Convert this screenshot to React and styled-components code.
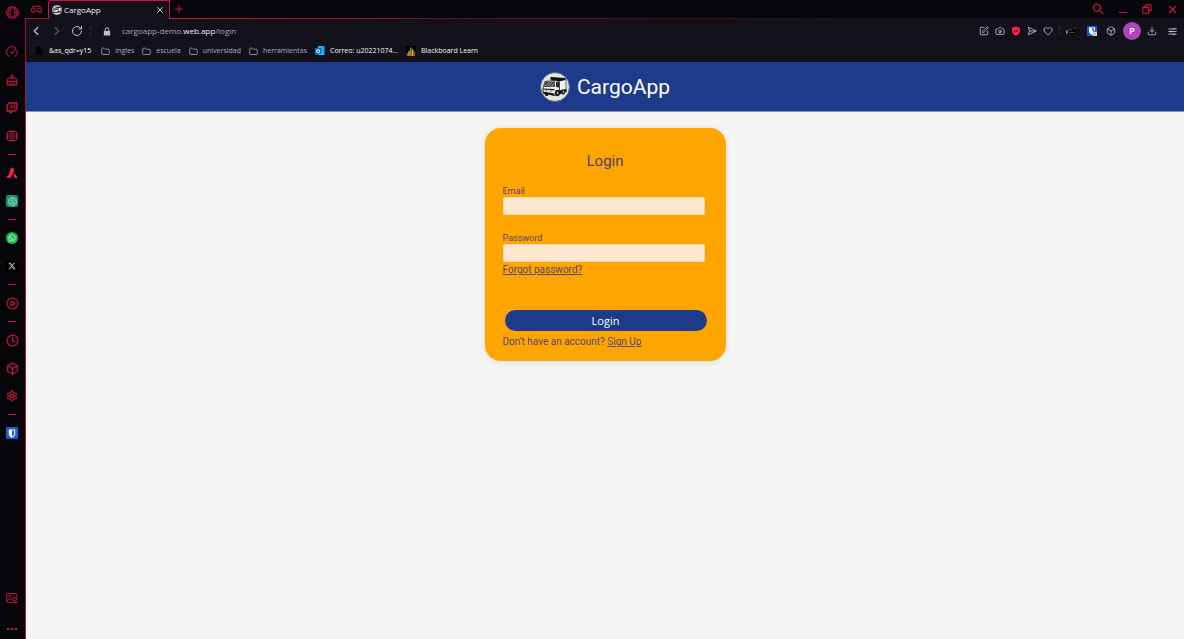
import React from "react";
import styled, { createGlobalStyle } from "styled-components";
import { Box, Camera, ChevronLeft, ChevronRight, Clock, Download, Folder, Heart, RotateCw, SendHorizontal, SquarePen, X, Plus, CirclePlay } from "lucide-react";
import { FaWhatsapp, FaXTwitter } from "react-icons/fa6";
import { SiOpenai } from "react-icons/si";

const GlobalStyle = createGlobalStyle`
  *, *::before, *::after { box-sizing: border-box; }
  body { margin: 0; background: #f5f5f5; font-family: Roboto, "Liberation Sans", sans-serif; }
  button { font-family: inherit; border: 0; padding: 0; background: none; color: inherit; cursor: pointer; }
  svg { display: block; flex: none; }
`;

const red = "#d0163f";
const line = "#a01230";
const ui = `"Open Sans", "Noto Sans", sans-serif`;

const Shell = styled.div`
  display: grid;
  grid-template-columns: 25px 1fr;
  min-height: 100vh;
  background: #07060b;
`;
const Sidebar = styled.nav`
  display: flex;
  flex-direction: column;
  padding-right: 1px;
  color: ${red};
`;
const SideButton = styled.button`
  display: flex;
  align-items: center;
  justify-content: center;
  width: 100%;
  height: ${(p) => p.$height || 28}px;
  margin-bottom: ${(p) => p.$after || 0}px;
  margin-top: ${(p) => (p.$push ? "auto" : 0)};
`;
const SideRule = styled.hr`
  width: 8px;
  height: 1px;
  margin: 4px auto;
  border: 0;
  background: ${red};
`;
const Badge = styled.span`
  display: flex;
  align-items: center;
  justify-content: center;
  width: 12px;
  height: 12px;
  border-radius: ${(p) => p.$radius}px;
  background: ${(p) => p.$bg};
  color: ${(p) => p.$color || "#fff"};
`;
const Main = styled.div`
  display: flex;
  flex-direction: column;
  min-width: 0;
`;
const TabBar = styled.div`
  display: flex;
  height: 19px;
  color: ${red};
`;
const TabLead = styled.div`
  display: flex;
  align-items: center;
  justify-content: center;
  width: 23px;
  border-bottom: 1px solid ${line};
`;
const Tab = styled.div`
  display: flex;
  align-items: center;
  width: 122px;
  padding: 0 4px 0 3px;
  gap: 2px;
  background: #13111a;
  border: 1px solid ${red};
  border-bottom: 0;
  border-radius: 3px 0 0 0;
  color: #f2f0f5;
  font: 500 8px/16px ${ui};
`;
const TabTitle = styled.span`
  flex: 1;
`;
const TabRest = styled.div`
  display: flex;
  flex: 1;
  align-items: center;
  gap: 14px;
  padding: 0 5px 0 3px;
  border-bottom: 1px solid;
  border-image: linear-gradient(90deg, ${red}, #5c0d20 35%, #13111a 80%) 1;
`;
const Push = styled.span`
  flex: 1;
`;
const Frame = styled.div`
  display: flex;
  flex: 1;
  flex-direction: column;
  border-left: 1px solid ${line};
  background: #f5f5f5;
`;
const Toolbar = styled.div`
  display: flex;
  align-items: center;
  height: 24px;
  padding: 0 7px 0 3px;
  background: #13111a;
  color: #c5bfd2;
`;
const NavGroup = styled.div`
  display: flex;
  align-items: center;
  gap: ${(p) => p.$gap}px;
  margin-left: ${(p) => p.$left || 0}px;
`;
const Address = styled.div`
  flex: 1;
  padding-left: 11px;
  color: #aaa5b8;
  font: 400 8px/16px ${ui};
`;
const Host = styled.strong`
  color: #efedf5;
  font-weight: 500;
`;
const Dots = styled.span`
  width: 1px;
  height: 8px;
  border-left: 1px dotted #3a3644;
`;
const Avatar = styled.button`
  width: 18px;
  height: 18px;
  border-radius: 9px;
  background: #ab47bc;
  color: #fff;
  font: 600 9px/18px ${ui};
`;
const Bookmarks = styled.div`
  display: flex;
  align-items: flex-start;
  height: 19px;
  padding: 0 9px 0 8px;
  gap: 8px;
  background: #13111a;
`;
const Bookmark = styled.a`
  display: flex;
  align-items: center;
  gap: 5px;
  color: ${(p) => (p.$bright ? "#f8f6fc" : "#b0abca")};
  font: ${(p) => (p.$bright ? 500 : 400)} 7px/16px ${ui};
  text-decoration: none;
  white-space: nowrap;
`;
const BookmarkGroup = styled.div`
  display: flex;
  gap: 8px;
  padding-left: 2px;
`;
const Header = styled.header`
  display: flex;
  align-items: center;
  justify-content: center;
  gap: 7px;
  height: 50px;
  border-bottom: 1px solid #8995be;
  background: #1e3a8a;
`;
const Brand = styled.h1`
  margin: 0;
  color: #fff;
  font-size: 21px;
  line-height: 24px;
  font-weight: 400;
`;
const Card = styled.form`
  display: flex;
  flex-direction: column;
  width: 241px;
  margin: 16px auto;
  padding: 23px 18px 11px;
  border-radius: 16px;
  background: #ffa500;
  box-shadow: 0 1px 6px rgba(0, 0, 0, 0.12);
  color: #55457a;
`;
const Title = styled.h2`
  margin: 0 0 14px;
  color: #4a3f7c;
  font-size: 15px;
  line-height: 20px;
  font-weight: 400;
  text-align: center;
`;
const Field = styled.div`
  display: flex;
  flex-direction: column;
  margin: 0 3px ${(p) => p.$after || 0}px 0;
`;
const Label = styled.label`
  font-size: 9px;
  line-height: 12px;
`;
const Input = styled.input`
  width: 100%;
  height: 18px;
  padding: 0 4px;
  border: 1px solid #fbdcae;
  border-radius: 2px;
  background: #fde8cf;
  outline: 0;
`;
const Small = styled.p`
  margin: 0;
  font-size: 10px;
  line-height: 16px;
`;
const Link = styled.a`
  color: inherit;
  text-decoration: underline;
`;
const Submit = styled.button`
  height: 21px;
  margin: 32px 1px 3px 2px;
  border-radius: 11px;
  background: #1e3a8a;
  color: #fff;
  font: 400 11px/21px ${ui};
`;

const Stroke = ({ size = 12, children, width = 1 }) => (
  <svg width={size} height={size} viewBox="0 0 12 12" fill="none" stroke="currentColor" strokeWidth={width} strokeLinecap="round" strokeLinejoin="round">
    {children}
  </svg>
);

const Truck = ({ size }) => (
  <svg width={size} height={size} viewBox="0 0 30 30">
    <circle cx="15" cy="15" r="14.5" fill="#e4e4e4" stroke="#5a5f72" />
    <path d="M11 6 25 7 26 8v11l-7 2V9.5L11 8z" fill="#f2f2f2" stroke="#333" strokeWidth="0.7" />
    <path d="M10.500 5 25.500 6v2l-6.500 1.500-8.500-2z" fill="#111" />
    <path d="M5 9.500 16 8.500l3.500 1.500v11.500l-5 2L3 20v-4z" fill="#f4f4f4" stroke="#1c1c1c" strokeWidth="0.8" />
    <path d="m5.500 10 9.500-.5v5.300L3.800 15z" fill="#3c3c3c" />
    <path d="m16 9.700 3 .8v5l-3-.5z" fill="#2a2a2a" />
    <path d="m5.500 14 3.500-3.500M8 14.300l4-4M11.500 14.300l2.500-3" stroke="#d8d8d8" strokeWidth="0.8" />
    <path d="M3 16.500 14.500 17v1.300L3 17.600zM2.500 19.500 14.500 21.500v2.200L3.500 21.700zM19 18.500l7.500-1.500v3l-7.500 2.500z" fill="#141414" />
    <path d="M5.500 18.700h2M9.500 19.200h3" stroke="#555" />
    <ellipse cx="17.300" cy="21" rx="2.400" ry="3.200" fill="#141414" />
    <ellipse cx="17.500" cy="21" rx="0.900" ry="1.400" fill="#aaa" />
    <ellipse cx="23.200" cy="20" rx="2" ry="2.700" fill="#222" />
    <ellipse cx="23.400" cy="20" rx="0.700" ry="1.100" fill="#bbb" />
    <path d="M4.500 21.500h3.500v2.500H5.500z" fill="#222" />
  </svg>
);

const Opera = () => (
  <Stroke size={13} width={0.9}>
    <circle cx="6" cy="6" r="5.500" />
    <ellipse cx="6" cy="6" rx="2.400" ry="4.300" />
    <path d="M4.300 1.600C.9 3.600.9 8.400 4.300 10.400M7.700 1.600c3.400 2 3.400 6.800 0 8.800" />
  </Stroke>
);
const Gauge = () => (
  <Stroke>
    <path d="M3 10.500A5.400 5.400 0 1 1 9.800 2.200M11.200 4.800A5.400 5.400 0 0 1 9 10.500" />
    <circle cx="6" cy="7" r="0.900" />
    <path d="m6.800 6.200 3-3" />
  </Stroke>
);
const Broom = () => (
  <Stroke>
    <path d="M5 4V1.500Q6 .3 7 1.500V4" />
    <path d="M1.500 7V5.500Q1.500 4 3 4h6q1.500 0 1.500 1.500V7z" />
    <path d="M1.500 7 1 11h10l-.5-4M4 11V9M6 11V9M8 11V9" />
  </Stroke>
);
const Twitch = () => (
  <Stroke width={1.3}>
    <path d="M1.200 3 3 1h8v5.500L8.500 9H6.500L4.300 11V9H1.200z" />
    <path d="M5.500 3.500V6M8.300 3.500V6" />
  </Stroke>
);
const Chip = () => (
  <Stroke width={0.9}>
    <rect x="1.500" y="1.500" width="9" height="9" rx="1.500" />
    <rect x="3.700" y="3.200" width="4.600" height="5.600" rx="1" />
    <path d="M5.200 5.300h1.600M5.200 6.800h1.600M.5 4v0M.5 6v0M.5 8v0M11.500 4v0M11.500 6v0M11.500 8v0M4 .5v0M6 .5v0M8 .5v0M4 11.500v0M6 11.500v0M8 11.500v0" />
  </Stroke>
);
const Aria = () => (
  <svg width="12" height="12" viewBox="0 0 12 12" fill="#fa1e4e">
    <path d="M4.700 1.200C5.300 0 6.800.2 7.200 1.300L8.200 4 5 9.800C4 11.600 1.800 11.600 1 10.500c-.4-.7 0-1.300.6-1.500C3.300 8.200 3.800 4.500 4.700 1.200z" />
    <path d="M7.800 6.200c.8-.3 3.500 3.300 3.400 4.500-.2.900-1.500 1.100-2.200.2-.8-1-1.400-2.400-1.500-3.300-.1-.7-.1-1.200.3-1.400z" />
  </svg>
);
const Gear = () => (
  <Stroke>
    <circle cx="6" cy="6" r="1.700" />
    <path d="M6 .7 7.700 2.700 10.500 3.300 9.800 6l.7 2.700-2.800.6L6 11.300 4.300 9.300 1.500 8.700 2.200 6l-.7-2.700 2.800-.6zM4.300 2.700l.8 1.700M7.700 2.700l-.8 1.700M9.800 6H7.800M4.300 9.300l.8-1.700M7.700 9.300l-.8-1.700M2.200 6h2" />
  </Stroke>
);
const Easel = () => (
  <Stroke>
    <path d="M10.800 6V3c0-1-.5-1.500-1.500-1.500h-7C1.300 1.500.8 2 .8 3v6c0 1 .5 1.500 1.500 1.500H7M1 9l2.500-3 2 2L8 5l3 3M8 8l3.200 2.500-2.200.5z" />
    <circle cx="3.700" cy="4" r=".7" />
  </Stroke>
);
const Shield = () => (
  <svg width="8" height="9" viewBox="0 0 8 9">
    <path d="M.8.500h6.400v4C7.200 6.700 5.500 8 4 8.700 2.500 8 .8 6.700.8 4.500z" fill="#fff" />
    <path d="M4 1.500h2.200v3C6.200 6 5 7 4 7.500z" fill="#175ddc" />
  </svg>
);
const Gamepad = () => (
  <Stroke size={11} width={1.1}>
    <path d="M3.500 2.500h5C10.500 2.500 11 4 11.300 6.500c.3 3-1.500 3.500-2.800 2L7.500 7.300h-3L3.500 8.500c-1.300 1.500-3.100 1-2.800-2C1 4 1.500 2.500 3.500 2.500zM3 5h1.500M7.500 5H9" />
  </Stroke>
);
const Magnifier = () => (
  <Stroke width={1.2}>
    <circle cx="5" cy="4.800" r="3.600" />
    <path d="m7.800 7.600 3.200 3" />
  </Stroke>
);
const Verified = () => (
  <svg width="10" height="10" viewBox="0 0 10 10">
    <path d="M5 .5 9 1.700v3C9 7.200 7 9 5 9.700 3 9 1 7.200 1 4.700v-3z" fill="#fa1e4e" />
    <path d="m3.200 4.900 1.400 1.400 2.500-2.500" fill="none" stroke="#13111a" />
  </svg>
);
const Outlook = () => (
  <svg width="10" height="10" viewBox="0 0 10 10">
    <path d="M3 0h6.500v9H3z" fill="#28a8ea" />
    <path d="M3 5.500 9.500 9H3z" fill="#50d9ff" />
    <rect y="2" width="6.500" height="6.500" rx=".5" fill="#0078d4" />
    <circle cx="3.200" cy="5.200" r="1.500" fill="none" stroke="#fff" />
  </svg>
);
const Chart = () => (
  <svg width="10" height="10" viewBox="0 0 10 10">
    <rect width="10" height="10" fill="#000" />
    <path d="M.5 7H2v3H.5z" fill="#c83c32" />
    <path d="M2.200 5h1.600v5H2.200z" fill="#e8a020" />
    <path d="M4 1.500h1.600V10H4z" fill="#5ba042" />
    <path d="M5.800 3.500h1.600V10H5.800z" fill="#e8c020" />
    <path d="M7.600 5.500h1.600V10H7.600z" fill="#d04030" />
  </svg>
);
const Page = () => (
  <svg width="10" height="10" viewBox="0 0 10 10">
    <path d="M1.500 1h4.500l2.500 2.500V9h-7z" fill="#030304" />
  </svg>
);
const Ember = () => (
  <svg width="12" height="10" viewBox="0 0 12 10">
    <path d="M1 4 5 3.500 7 2l4-1-1 2.500h1L10 8 3 9 1 7.500z" fill="#050405" />
    <path d="M2 4.300 6 3.800M7.500 2.500 10.500 1.500M3 6.500h6" stroke="#4c4544" />
    <path d="M0 4.500h1.600v3H0z" fill="#f08a20" />
  </svg>
);
const Vault = () => (
  <svg width="10" height="10" viewBox="0 0 10 10">
    <rect width="10" height="10" rx="1" fill="#175ddc" />
    <path d="M2 1.500h6v3C8 6.700 6.500 8 5 8.700 3.500 8 2 6.700 2 4.500z" fill="#fff" />
    <path d="M5 2.500h2v2H5z" fill="#175ddc" />
    <rect x="5.500" y="5.500" width="4.500" height="4.500" fill="#d6d6d6" />
    <path d="M6.700 6V5h2v1M7.700 7.300v1" stroke="#555" fill="none" />
  </svg>
);

const folders = ["ingles", "escuela", "universidad", "herramientas"];

export default function App() {
  return (
    <>
      <GlobalStyle />
      <Shell>
        <Sidebar>
          <SideButton $height={24} $after={14} aria-label="Menu"><Opera /></SideButton>
          <SideButton aria-label="Speed dial"><Gauge /></SideButton>
          <SideButton aria-label="Cleaner"><Broom /></SideButton>
          <SideButton aria-label="Twitch"><Twitch /></SideButton>
          <SideButton aria-label="Limiter"><Chip /></SideButton>
          <SideRule />
          <SideButton aria-label="Aria"><Aria /></SideButton>
          <SideButton aria-label="Chat"><Badge $bg="#149075" $radius={2} $color="#b8e6d8"><SiOpenai size={9} /></Badge></SideButton>
          <SideRule />
          <SideButton aria-label="WhatsApp"><Badge $bg="#12bd4f" $radius={6}><FaWhatsapp size={8} /></Badge></SideButton>
          <SideButton aria-label="X"><Badge $bg="#000" $radius={2} $color="#c8c8c8"><FaXTwitter size={8} /></Badge></SideButton>
          <SideRule />
          <SideButton aria-label="Player"><CirclePlay size={13} strokeWidth={2} /></SideButton>
          <SideRule />
          <SideButton aria-label="History"><Clock size={13} strokeWidth={2} /></SideButton>
          <SideButton aria-label="Extensions"><Box size={13} strokeWidth={2} /></SideButton>
          <SideButton aria-label="Settings"><Gear /></SideButton>
          <SideRule />
          <SideButton aria-label="Passwords"><Badge $bg="#175ddc" $radius={1}><Shield /></Badge></SideButton>
          <SideButton $push $after={6} aria-label="Wallpaper"><Easel /></SideButton>
          <SideButton $height={21} aria-label="More">
            <svg width="10" height="2" viewBox="0 0 10 2" fill={red}><path d="M0 0h2v2H0zM4 0h2v2H4zM8 0h2v2H8z" /></svg>
          </SideButton>
        </Sidebar>
        <Main>
          <TabBar>
            <TabLead><Gamepad /></TabLead>
            <Tab>
              <Truck size={10} />
              <TabTitle>CargoApp</TabTitle>
              <button aria-label="Close tab"><X size={10} strokeWidth={2} /></button>
            </Tab>
            <TabRest>
              <button aria-label="New tab"><Plus size={12} strokeWidth={2} /></button>
              <Push />
              <button aria-label="Search tabs"><Magnifier /></button>
              <button aria-label="Minimize">
                <svg width="10" height="10"><path d="M1 8.500h8" stroke={red} /></svg>
              </button>
              <button aria-label="Restore">
                <Stroke size={10} width={1.3}><path d="M1 4h7v7H1zM4 4V1h7v7H8" /></Stroke>
              </button>
              <button aria-label="Close"><X size={13} strokeWidth={2} /></button>
            </TabRest>
          </TabBar>
          <Frame>
            <Toolbar>
              <NavGroup $gap={7}>
                <ChevronLeft size={14} strokeWidth={2} />
                <ChevronRight size={14} strokeWidth={2} opacity={0.4} />
                <RotateCw size={12} strokeWidth={2} />
                <Dots />
              </NavGroup>
              <NavGroup $left={12}>
                <svg width="8" height="9" viewBox="0 0 8 9"><path d="M.8 4h6.400v4.500H.8z" fill="#c5bdd6" /><path d="M2.300 4V2.500a1.700 1.700 0 0 1 3.400 0V4" fill="none" stroke="#c5bdd6" /></svg>
              </NavGroup>
              <Address>cargoapp-demo.<Host>web.app</Host>/login</Address>
              <NavGroup $gap={6}>
                <SquarePen size={10} strokeWidth={2} />
                <Camera size={10} strokeWidth={2} />
                <Verified />
                <SendHorizontal size={10} strokeWidth={2} />
                <Heart size={10} strokeWidth={2} />
                <Dots />
              </NavGroup>
              <NavGroup $gap={9} $left={6}>
                <Ember />
                <Vault />
                <Box size={10} strokeWidth={2} />
              </NavGroup>
              <NavGroup $gap={6} $left={7}>
                <Avatar aria-label="Profile">P</Avatar>
                <Download size={10} strokeWidth={2} />
              </NavGroup>
              <NavGroup $left={11}>
                <Stroke size={9} width={1.2}><path d="M1 2.500h10M1 6h10M1 9.500h10M8 1.500v2M4 5v2M8 8.500v2" /></Stroke>
              </NavGroup>
            </Toolbar>
            <Bookmarks>
              <Bookmark href="#qdr" $bright><Page />&amp;as_qdr=y15</Bookmark>
              <BookmarkGroup>
                {folders.map((name) => (
                  <Bookmark href={`#${name}`} key={name}><Folder size={9} strokeWidth={2} />{name}</Bookmark>
                ))}
              </BookmarkGroup>
              <Bookmark href="#correo" $bright><Outlook />Correo: u20221074...</Bookmark>
              <Bookmark href="#blackboard" $bright><Chart />Blackboard Learn</Bookmark>
            </Bookmarks>
            <Header>
              <Truck size={30} />
              <Brand>CargoApp</Brand>
            </Header>
            <main>
              <Card onSubmit={(e) => e.preventDefault()}>
                <Title>Login</Title>
                <Field $after={17}>
                  <Label htmlFor="email">Email</Label>
                  <Input id="email" type="email" />
                </Field>
                <Field>
                  <Label htmlFor="password">Password</Label>
                  <Input id="password" type="password" />
                </Field>
                <Small><Link href="#forgot">Forgot password?</Link></Small>
                <Submit type="submit">Login</Submit>
                <Small>Don't have an account? <Link href="#signup">Sign Up</Link></Small>
              </Card>
            </main>
          </Frame>
        </Main>
      </Shell>
    </>
  );
}
